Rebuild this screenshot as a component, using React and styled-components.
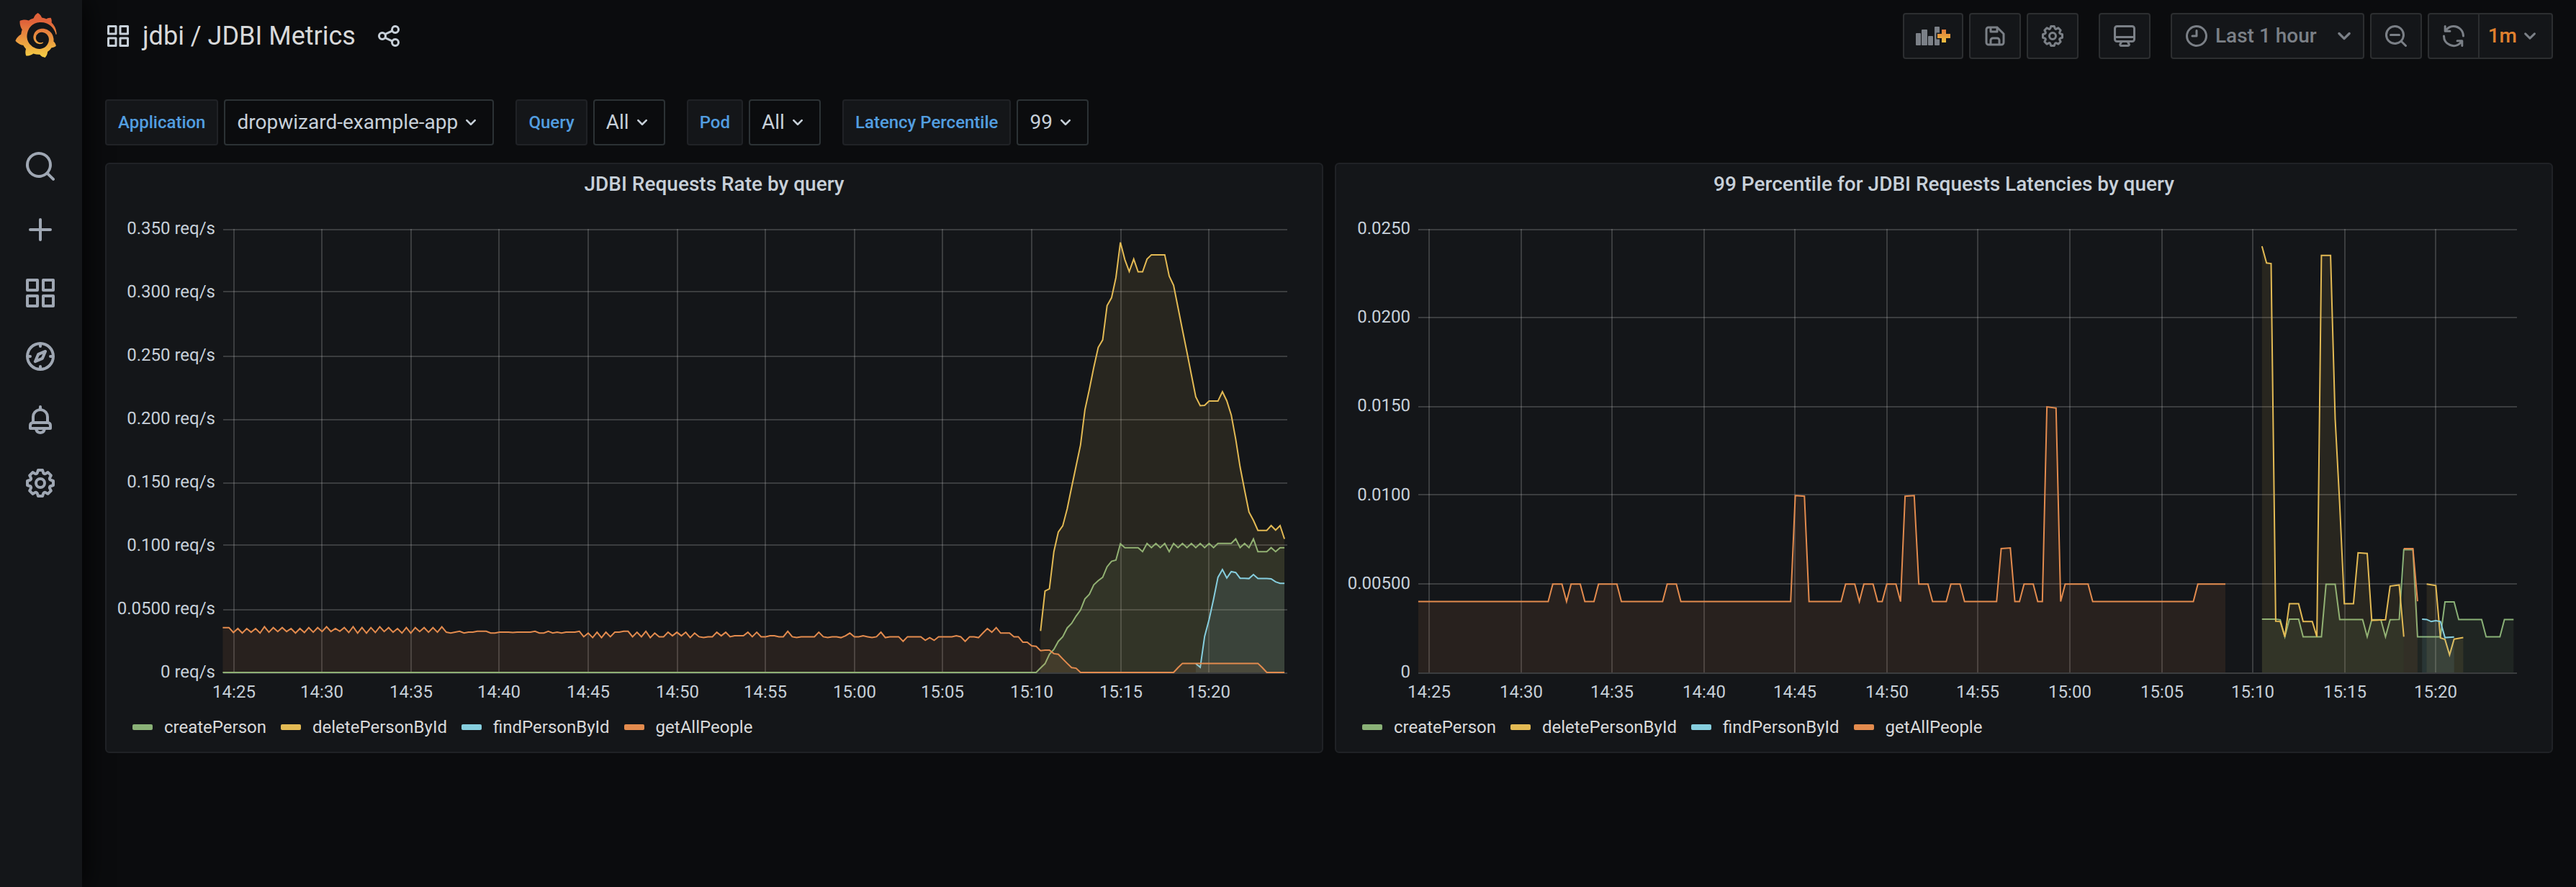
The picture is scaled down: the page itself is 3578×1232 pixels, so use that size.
import React from 'react'
import styled, { createGlobalStyle } from 'styled-components'
import { SiGrafana } from 'react-icons/si'

const colors = {
  page: '#0b0c0e',
  panel: '#141619',
  panelBorder: '#202226',
  controlBorder: '#2c2e30',
  inputBorder: '#2c3235',
  text: '#c7d0d9',
  heading: '#d8d9da',
  muted: '#7b8087',
  nav: '#9fa7b3',
  link: '#529ee0',
  orange: '#e0812f',
}

const GlobalStyle = createGlobalStyle`
  * {
    box-sizing: border-box;
  }
  body {
    margin: 0;
    background: ${colors.page};
    color: ${colors.text};
    font-family: Roboto, 'Liberation Sans', sans-serif;
  }
  button, select {
    font-family: inherit;
    margin: 0;
    cursor: pointer;
  }
`

// Icons, all on a 24 unit grid
const paths = {
  search:
    'M21.71,20.29,18,16.61A9,9,0,1,0,16.61,18l3.68,3.68a1,1,0,0,0,1.42,0A1,1,0,0,0,21.71,20.29ZM11,18a7,7,0,1,1,7-7A7,7,0,0,1,11,18Z',
  plus: 'M19,11H13V5a1,1,0,0,0-2,0v6H5a1,1,0,0,0,0,2h6v6a1,1,0,0,0,2,0V13h6a1,1,0,0,0,0-2Z',
  apps:
    'M10,13H3a1,1,0,0,0-1,1v7a1,1,0,0,0,1,1h7a1,1,0,0,0,1-1V14A1,1,0,0,0,10,13ZM9,20H4V15H9ZM21,2H14a1,1,0,0,0-1,1v7a1,1,0,0,0,1,1h7a1,1,0,0,0,1-1V3A1,1,0,0,0,21,2ZM20,9H15V4h5Zm1,4H14a1,1,0,0,0-1,1v7a1,1,0,0,0,1,1h7a1,1,0,0,0,1-1V14A1,1,0,0,0,21,13Zm-1,7H15V15h5ZM10,2H3A1,1,0,0,0,2,3v7a1,1,0,0,0,1,1h7a1,1,0,0,0,1-1V3A1,1,0,0,0,10,2ZM9,9H4V4H9Z',
  compass:
    'M12,2A10,10,0,1,0,22,12,10,10,0,0,0,12,2Zm1,17.93V19a1,1,0,0,0-2,0v.93A8,8,0,0,1,4.07,13H5a1,1,0,0,0,0-2H4.07A8,8,0,0,1,11,4.07V5a1,1,0,0,0,2,0V4.07A8,8,0,0,1,19.93,11H19a1,1,0,0,0,0,2h.93A8,8,0,0,1,13,19.93ZM15.14,7.55l-5,2.12a1,1,0,0,0-.52.52l-2.12,5a1,1,0,0,0,.21,1.1,1,1,0,0,0,.7.3.93.93,0,0,0,.4-.09l5-2.12a1,1,0,0,0,.52-.52l2.12-5a1,1,0,0,0-1.31-1.31Zm-2.49,5.1-2.28,1,1-2.28,2.28-1Z',
  bell:
    'M18,13.18V10a6,6,0,0,0-5-5.91V3a1,1,0,0,0-2,0V4.09A6,6,0,0,0,6,10v3.18A3,3,0,0,0,4,16v2a1,1,0,0,0,1,1H8.14a4,4,0,0,0,7.72,0H19a1,1,0,0,0,1-1V16A3,3,0,0,0,18,13.18ZM8,10a4,4,0,0,1,8,0v3H8Zm4,10a2,2,0,0,1-1.72-1h3.44A2,2,0,0,1,12,20Zm6-3H6V16a1,1,0,0,1,1-1H17a1,1,0,0,1,1,1Z',
  cog:
    'M21.32,9.55l-1.89-.63.89-1.78A1,1,0,0,0,20.13,6L18,3.87a1,1,0,0,0-1.15-.19l-1.78.89-.63-1.89A1,1,0,0,0,13.5,2h-3a1,1,0,0,0-.95.68L8.92,4.57,7.14,3.68A1,1,0,0,0,6,3.87L3.87,6a1,1,0,0,0-.19,1.15l.89,1.78-1.89.63A1,1,0,0,0,2,10.5v3a1,1,0,0,0,.68.95l1.89.63-.89,1.78A1,1,0,0,0,3.87,18L6,20.13a1,1,0,0,0,1.15.19l1.78-.89.63,1.89a1,1,0,0,0,.95.68h3a1,1,0,0,0,.95-.68l.63-1.89,1.78.89A1,1,0,0,0,18,20.13L20.13,18a1,1,0,0,0,.19-1.15l-.89-1.78,1.89-.63A1,1,0,0,0,22,13.5v-3A1,1,0,0,0,21.32,9.55ZM20,12.78l-1.2.4A2,2,0,0,0,17.64,16l.57,1.14-1.1,1.1L16,17.64a2,2,0,0,0-2.79,1.16l-.4,1.2H11.22l-.4-1.2A2,2,0,0,0,8,17.64l-1.14.57-1.1-1.1L6.36,16A2,2,0,0,0,5.2,13.18L4,12.78V11.22l1.2-.4A2,2,0,0,0,6.36,8L5.79,6.89l1.1-1.1L8,6.36A2,2,0,0,0,10.82,5.2l.4-1.2h1.56l.4,1.2A2,2,0,0,0,16,6.36l1.14-.57,1.1,1.1L17.64,8a2,2,0,0,0,1.16,2.79l1.2.4ZM12,8a4,4,0,1,0,4,4A4,4,0,0,0,12,8Zm0,6a2,2,0,1,1,2-2A2,2,0,0,1,12,14Z',
  save:
    'M20.71,9.29l-6-6a1,1,0,0,0-.32-.21A1.09,1.09,0,0,0,14,3H6A3,3,0,0,0,3,6V18a3,3,0,0,0,3,3H18a3,3,0,0,0,3-3V10A1,1,0,0,0,20.71,9.29ZM9,5h4V7H9Zm6,14H9V16a1,1,0,0,1,1-1h4a1,1,0,0,1,1,1Zm4-1a1,1,0,0,1-1,1H17V16a3,3,0,0,0-3-3H10a3,3,0,0,0-3,3v3H6a1,1,0,0,1-1-1V6A1,1,0,0,1,6,5H7V8A1,1,0,0,0,8,9h6a1,1,0,0,0,1-1V6.41l4,4Z',
  monitor:
    'M19,2H5A3,3,0,0,0,2,5V15a3,3,0,0,0,3,3H7.64l-.58,1a2,2,0,0,0,0,2,2,2,0,0,0,1.75,1h6.46A2,2,0,0,0,17,21a2,2,0,0,0,0-2l-.59-1H19a3,3,0,0,0,3-3V5A3,3,0,0,0,19,2ZM8.77,20,10,18H14l1.2,2ZM20,15a1,1,0,0,1-1,1H5a1,1,0,0,1-1-1V14H20Zm0-3H4V5A1,1,0,0,1,5,4H19a1,1,0,0,1,1,1Z',
  clock:
    'M12,2A10,10,0,1,0,22,12,10,10,0,0,0,12,2Zm0,18a8,8,0,1,1,8-8A8,8,0,0,1,12,20ZM12,6a1,1,0,0,0-1,1v4H8a1,1,0,0,0,0,2h4a1,1,0,0,0,1-1V7A1,1,0,0,0,12,6Z',
  zoomOut:
    'M21.71,20.29,18,16.61A9,9,0,1,0,16.61,18l3.68,3.68a1,1,0,0,0,1.42,0A1,1,0,0,0,21.71,20.29ZM11,18a7,7,0,1,1,7-7A7,7,0,0,1,11,18ZM15,10H7a1,1,0,0,0,0,2h8a1,1,0,0,0,0-2Z',
  sync:
    'M19.91,15.51H15.38a1,1,0,0,0,0,2h2.4A8,8,0,0,1,4,12a1,1,0,1,0-2,0,10,10,0,0,0,16.88,7.23V21a1,1,0,0,0,2,0V16.5A1,1,0,0,0,19.91,15.51ZM12,2A10,10,0,0,0,5.12,4.77V3a1,1,0,0,0-2,0V7.5a1,1,0,0,0,1,1h4.5a1,1,0,0,0,0-2H6.22A8,8,0,0,1,20,12a1,1,0,0,0,2,0A10,10,0,0,0,12,2Z',
  angleDown:
    'M17,9.17a1,1,0,0,0-1.41,0L12,12.71,8.46,9.17a1,1,0,0,0-1.41,0,1,1,0,0,0,0,1.42l4.24,4.24a1,1,0,0,0,1.42,0L17,10.59A1,1,0,0,0,17,9.17Z',
  share:
    'M18,14a4,4,0,0,0-3.08,1.48l-5.1-2.35a3.64,3.64,0,0,0,0-2.26l5.1-2.35A4,4,0,1,0,14,6a4.17,4.17,0,0,0,.07.71L8.79,9.14a4,4,0,1,0,0,5.72l5.28,2.43A4.17,4.17,0,0,0,14,18a4,4,0,1,0,4-4ZM18,4a2,2,0,1,1-2,2A2,2,0,0,1,18,4ZM6,14a2,2,0,1,1,2-2A2,2,0,0,1,6,14Zm12,6a2,2,0,1,1,2-2A2,2,0,0,1,18,20Z',
}

const IconSvg = styled.svg`
  display: block;
  flex: none;
  fill: currentColor;
`

const Icon = ({ name, size = 36 }) => (
  <IconSvg viewBox="0 0 24 24" width={size} height={size} aria-hidden="true">
    <path d={paths[name]} />
  </IconSvg>
)

const AddPanelIcon = () => (
  <IconSvg viewBox="0 0 48 26" width="48" height="26" aria-hidden="true">
    <defs>
      <linearGradient id="add-plus" x1="0" y1="0" x2="0" y2="1">
        <stop offset="0" stopColor="#e0783a" />
        <stop offset="1" stopColor="#f0c040" />
      </linearGradient>
    </defs>
    <rect x="0" y="9" width="7" height="17" rx="1" />
    <rect x="8" y="4" width="8" height="22" rx="1" />
    <rect x="17" y="13" width="7" height="13" rx="1" />
    <rect x="26" y="0" width="7" height="26" rx="1" />
    <path
      d="M36,4H42V10H48V16H42V22H36V16H30V10H36Z"
      fill="url(#add-plus)"
      stroke={colors.panel}
      strokeWidth="3"
      paintOrder="stroke"
    />
  </IconSvg>
)

// Shell
const Page = styled.div`
  display: flex;
  min-height: 100vh;
`

const Sidebar = styled.nav`
  flex: none;
  width: 114px;
  background: ${colors.panel};
  box-shadow: 0 0 40px #000;
`

const LogoLink = styled.a`
  display: flex;
  justify-content: center;
  height: 187px;
  padding: 18px 14px 0 0;

  svg {
    fill: url(#logo-fill);
  }
`

const NavItem = styled.button`
  display: flex;
  align-items: center;
  justify-content: center;
  width: 100%;
  height: 88px;
  padding: 0 2px 0 0;
  border: 0;
  background: none;
  color: ${colors.nav};
`

const Main = styled.main`
  flex: 1;
  min-width: 0;
  padding: 0 32px;
`

const Toolbar = styled.header`
  display: flex;
  align-items: center;
  justify-content: space-between;
  height: 100px;
`

const TitleGroup = styled.div`
  display: flex;
  align-items: center;
  color: ${colors.text};
`

const PageTitle = styled.h1`
  margin: 0 28px 0 16px;
  font-size: 36px;
  line-height: 44px;
  font-weight: 400;
  color: ${colors.heading};
`

const PlainButton = styled.button`
  padding: 0;
  border: 0;
  background: none;
  color: inherit;
`

const Actions = styled.div`
  display: flex;
  gap: 28px;
`

const ButtonRow = styled.div`
  display: flex;
  gap: 8px;
`

const ToolButton = styled.button`
  display: flex;
  align-items: center;
  justify-content: center;
  height: 64px;
  min-width: 72px;
  padding: ${({ $menu }) => ($menu ? '0 6px 0 16px' : '0 16px')};
  border: 2px solid ${colors.controlBorder};
  border-radius: 4px;
  background: ${colors.panel};
  color: ${colors.muted};
  font-size: 28px;
  line-height: 36px;
  font-weight: 500;
`

const TimeLabel = styled.span`
  margin: 0 18px 0 8px;
`

const SplitButton = styled.div`
  display: flex;

  ${ToolButton}:first-child {
    border-radius: 4px 0 0 4px;
  }
  ${ToolButton}:last-child {
    margin-left: -2px;
    padding: 0 12px;
    border-radius: 0 4px 4px 0;
  }
`

const Interval = styled.span`
  color: ${colors.orange};
`

// Template variables
const Variables = styled.div`
  display: flex;
  flex-wrap: wrap;
  gap: 30px;
  margin-top: 38px;
`

const Variable = styled.div`
  display: flex;
  gap: 8px;
`

const VariableLabel = styled.label`
  display: flex;
  align-items: center;
  height: 64px;
  padding: 0 16px;
  border: 2px solid ${colors.panelBorder};
  border-radius: 4px;
  background: ${colors.panel};
  color: ${colors.link};
  font-size: 24px;
  font-weight: 500;
`

const SelectBox = styled.div`
  display: flex;
  align-items: center;
  gap: 2px;
  height: 64px;
  padding: 0 14px 0 16px;
  border: 2px solid ${colors.inputBorder};
  border-radius: 4px;
`

const Select = styled.select`
  appearance: none;
  padding: 0;
  border: 0;
  background: none;
  color: ${colors.text};
  font-size: 28px;
  line-height: 36px;
`

// Panels
const Panels = styled.div`
  display: grid;
  grid-template-columns: repeat(2, minmax(0, 1fr));
  gap: 16px;
  margin-top: 24px;
`

const PanelBox = styled.section`
  border: 2px solid ${colors.panelBorder};
  border-radius: 6px;
  background: ${colors.panel};
`

const PanelTitle = styled.h2`
  margin: 0;
  font-size: 28px;
  line-height: 56px;
  font-weight: 500;
  text-align: center;
`

const ChartSvg = styled.svg`
  display: block;
  width: 100%;
  height: auto;

  text {
    fill: ${colors.text};
    font-size: 24px;
    text-rendering: geometricPrecision;
  }
`

const Legend = styled.ul`
  display: flex;
  flex-wrap: wrap;
  gap: 20px;
  margin: 0;
  padding: 0 36px 8px;
  list-style: none;
  font-size: 24px;
  line-height: 52px;
  color: ${colors.heading};
`

const LegendItem = styled.li`
  display: flex;
  align-items: center;
  gap: 16px;

  &::before {
    content: '';
    width: 28px;
    height: 8px;
    border-radius: 2px;
    background: ${({ $color }) => $color};
  }
`

// One sample every 15 seconds, sample 0 is 14:25.
// Heights are measured over the baseline, FULL is the top of the axis.
const FULL = 1462
const PLOT_TOP = 35
const PLOT_BOTTOM = 650
const PLOT_RIGHT = 1640

const times = ['14:25', '14:30', '14:35', '14:40', '14:45', '14:50', '14:55', '15:00', '15:05', '15:10', '15:15', '15:20']

const names = [
  ['createPerson', '#8ab177'],
  ['deletePersonById', '#e3ba54'],
  ['findPersonById', '#86cede'],
  ['getAllPeople', '#e38b4e'],
]

const from = (start, heights) => heights.map((h, i) => [start + i, h])

const rateSeries = [
  [
    [
      [-2.4, 0],
      ...from(181, [
        0, 15, 29, 60, 76, 103, 118, 147, 162, 186, 206, 243, 258, 289, 303, 314, 349, 367, 371, 425, 412, 412, 412,
        412, 399, 426, 412, 426, 412, 426, 399, 426, 412, 426, 412, 426, 412, 426, 412, 426, 412, 426, 426, 426, 426,
        441, 412, 426, 412, 441, 399, 399, 399, 412, 399, 412, 412,
      ]),
    ],
  ],
  [
    from(182, [
      137, 269, 276, 399, 464, 484, 540, 611, 681, 751, 867, 935, 1007, 1073, 1098, 1211, 1237, 1304, 1420, 1363, 1324,
      1365, 1323, 1323, 1365, 1379, 1379, 1379, 1379, 1309, 1278, 1204, 1131, 1058, 983, 910, 881, 882, 896, 896, 896,
      927, 897, 850, 770, 678, 602, 530, 502, 469, 469, 469, 485, 470, 485, 441,
    ]),
  ],
  [
    from(217, [
      29, 17, 119, 175, 242, 314, 340, 312, 333, 330, 311, 311, 310, 323, 310, 310, 310, 309, 299, 294, 294,
    ]),
  ],
  [
    [
      [-2.4, 148],
      ...from(-1, [
        148, 132, 145, 130, 145, 133, 145, 130, 151, 133, 148, 135, 148, 135, 145, 130, 145, 132, 148, 133, 148, 135,
        151, 135, 145, 136, 148, 132, 151, 130, 148, 130, 148, 132, 151, 135, 148, 133, 145, 130, 148, 130, 148, 135,
        148, 133, 148, 133, 151, 133, 130, 133, 136, 130, 133, 133, 136, 136, 136, 130, 130, 133, 133, 133, 132, 133,
        133, 133, 133, 136, 130, 130, 136, 130, 133, 130, 133, 133, 133, 136, 118, 130, 115, 133, 115, 133, 118, 133,
        133, 136, 136, 118, 133, 118, 136, 115, 130, 118, 118, 133, 121, 133, 121, 133, 115, 130, 118, 115, 118, 118,
        133, 121, 133, 118, 121, 121, 121, 133, 118, 133, 118, 118, 121, 121, 118, 118, 136, 118, 115, 118, 118, 118,
        118, 133, 118, 115, 118, 118, 115, 121, 130, 118, 118, 121, 118, 115, 118, 133, 115, 118, 118, 118, 103, 118,
        118, 118, 118, 106, 115, 106, 118, 118, 118, 118, 121, 118, 103, 118, 118, 115, 130, 145, 133, 148, 130, 130,
        130, 118, 118, 100, 100, 88, 86, 72, 74, 74, 62, 60, 45, 30, 16, 14, 0,
      ]),
      ...from(212, [0, 16]),
      [214, 30],
      [231, 30],
      [232, 16],
      [233, 0],
      [237, 0],
    ],
  ],
]

const latencySeries = [
  [
    [
      [182, 176], [185, 176], [186, 174], [187, 118], [188, 176], [190, 176], [191, 118], [195, 118], [196, 291],
      [198, 291], [199, 175], [204, 175], [205, 118], [206, 174], [208, 174], [209, 118], [210, 174], [212, 175],
      [213, 406], [215, 405], [216, 118], [221, 118], [222, 233], [224, 233], [225, 175], [230, 175], [231, 118],
      [234, 118], [235, 175], [237, 175],
    ],
  ],
  [
    [
      [182, 1407], [183, 1352], [184, 1350], [185, 169], [186, 168], [187, 118], [188, 227], [190, 227], [191, 168],
      [193, 168], [194, 118], [195, 1377], [197, 1377], [198, 837], [199, 555], [200, 227], [202, 227], [203, 395],
      [205, 393], [206, 172], [209, 174], [210, 285], [212, 289], [213, 118],
    ],
    [[218, 292], [220, 287], [221, 114], [222, 109], [223, 58], [224, 110], [226, 115]],
  ],
  [[[217, 176], [218, 175], [219, 168], [220, 171], [221, 168], [222, 115], [224, 117]]],
  [
    [
      [-2.4, 234], [26, 234], [27, 292], [29, 292], [30, 234], [31, 292], [33, 292], [34, 234], [36, 234], [37, 292],
      [41, 292], [42, 234], [51, 234], [52, 292], [54, 292], [55, 234], [79, 234], [80, 584], [82, 582], [83, 234],
      [90, 234], [91, 292], [93, 292], [94, 234], [95, 292], [97, 292], [98, 234], [99, 234], [100, 292], [102, 292],
      [103, 234], [104, 582], [106, 584], [107, 292], [109, 292], [110, 234], [113, 234], [114, 292], [116, 292],
      [117, 234], [124, 234], [125, 409], [127, 411], [128, 234], [129, 234], [130, 292], [132, 292], [133, 234],
      [134, 234], [135, 877], [137, 873], [138, 234], [139, 292], [144, 292], [145, 234], [167, 234], [168, 292],
      [174, 292],
    ],
    [[213, 409], [215, 409], [216, 235]],
  ],
]

const rateChart = {
  title: 'JDBI Requests Rate by query',
  left: 162,
  first: 176.2,
  step: 6.16,
  yTicks: [
    ['0.350 req/s', 35],
    ['0.300 req/s', 121],
    ['0.250 req/s', 211],
    ['0.200 req/s', 299],
    ['0.150 req/s', 387],
    ['0.100 req/s', 473],
    ['0.0500 req/s', 563],
    ['0 req/s', 651],
  ],
  series: rateSeries,
}

const latencyChart = {
  title: '99 Percentile for JDBI Requests Latencies by query',
  left: 114,
  first: 129.2,
  step: 6.355,
  yTicks: [
    ['0.0250', 35],
    ['0.0200', 157],
    ['0.0150', 281],
    ['0.0100', 403],
    ['0.00500', 527],
    ['0', 651],
  ],
  series: latencySeries,
}

// 2px lines stay crisp when their centre is an odd pixel
const snap = x => 2 * Math.floor(x / 2) + 1

const Chart = ({ chart }) => {
  const { title, left, first, step, yTicks, series } = chart
  const px = k => (first + k * step).toFixed(1)
  const py = h => (PLOT_BOTTOM - (h / FULL) * (PLOT_BOTTOM - PLOT_TOP)).toFixed(1)
  const labelGap = 616 / (yTicks.length - 1)

  return (
    <ChartSvg viewBox="0 0 1688 700" role="img" aria-label={title}>
      <g stroke="#c8c8c8" strokeOpacity="0.22" strokeWidth="2">
        {yTicks.map(([label, y]) => (
          <line key={label} x1={left} x2={PLOT_RIGHT} y1={y} y2={y} />
        ))}
        {times.map((time, i) => {
          const x = snap(first + i * 20 * step)
          return <line key={time} x1={x} x2={x} y1={PLOT_TOP - 1} y2={PLOT_BOTTOM} />
        })}
      </g>
      {series.map((segments, s) =>
        segments.map(points => {
          const line = points.map(([k, h]) => `${px(k)},${py(h)}`).join(' ')
          const start = px(points[0][0])
          const end = px(points[points.length - 1][0])
          return (
            <g key={`${names[s][0]}-${start}`}>
              <polygon
                points={`${start},${PLOT_BOTTOM} ${line} ${end},${PLOT_BOTTOM}`}
                fill={names[s][1]}
                fillOpacity="0.1"
              />
              <polyline points={line} fill="none" stroke={names[s][1]} strokeWidth="2" />
            </g>
          )
        })
      )}
      {yTicks.map(([label], i) => (
        <text key={label} x={left - 11} y={Math.round(41 + i * labelGap)} textAnchor="end">
          {label}
        </text>
      ))}
      {times.map((time, i) => (
        <text key={time} x={snap(first + i * 20 * step)} y="685" textAnchor="middle">
          {time}
        </text>
      ))}
    </ChartSvg>
  )
}

const Panel = ({ chart }) => (
  <PanelBox>
    <PanelTitle>{chart.title}</PanelTitle>
    <Chart chart={chart} />
    <Legend>
      {names.map(([name, color]) => (
        <LegendItem key={name} $color={color}>
          {name}
        </LegendItem>
      ))}
    </Legend>
  </PanelBox>
)

const navItems = [
  ['search', 'Search'],
  ['plus', 'Create'],
  ['apps', 'Dashboards'],
  ['compass', 'Explore'],
  ['bell', 'Alerting'],
  ['cog', 'Configuration'],
]

const variables = [
  ['application', 'Application', 'dropwizard-example-app'],
  ['query', 'Query', 'All'],
  ['pod', 'Pod', 'All'],
  ['percentile', 'Latency Percentile', '99'],
]

const App = () => (
  <>
    <GlobalStyle />
    <Page>
      <Sidebar>
        <LogoLink href="#" aria-label="Home">
          <svg width="0" height="0" aria-hidden="true">
            <defs>
              <linearGradient id="logo-fill" x1="0" y1="0" x2="0" y2="1">
                <stop offset="0.2" stopColor="#e0623a" />
                <stop offset="1" stopColor="#f5cf45" />
              </linearGradient>
            </defs>
          </svg>
          <SiGrafana size={62} />
        </LogoLink>
        {navItems.map(([icon, label]) => (
          <NavItem key={icon} type="button" aria-label={label}>
            <Icon name={icon} size={48} />
          </NavItem>
        ))}
      </Sidebar>
      <Main>
        <Toolbar>
          <TitleGroup>
            <Icon name="apps" />
            <PageTitle>jdbi / JDBI Metrics</PageTitle>
            <PlainButton type="button" aria-label="Share dashboard">
              <Icon name="share" />
            </PlainButton>
          </TitleGroup>
          <Actions>
            <ButtonRow>
              <ToolButton type="button" aria-label="Add panel">
                <AddPanelIcon />
              </ToolButton>
              <ToolButton type="button" aria-label="Save dashboard">
                <Icon name="save" />
              </ToolButton>
              <ToolButton type="button" aria-label="Dashboard settings">
                <Icon name="cog" />
              </ToolButton>
            </ButtonRow>
            <ToolButton type="button" aria-label="Cycle view mode">
              <Icon name="monitor" />
            </ToolButton>
            <ButtonRow>
              <ToolButton type="button" $menu>
                <Icon name="clock" />
                <TimeLabel>Last 1 hour</TimeLabel>
                <Icon name="angleDown" size={40} />
              </ToolButton>
              <ToolButton type="button" aria-label="Zoom out">
                <Icon name="zoomOut" />
              </ToolButton>
              <SplitButton>
                <ToolButton type="button" aria-label="Refresh">
                  <Icon name="sync" />
                </ToolButton>
                <ToolButton type="button" aria-label="Refresh interval, 1m">
                  <Interval>1m</Interval>
                  <Icon name="angleDown" />
                </ToolButton>
              </SplitButton>
            </ButtonRow>
          </Actions>
        </Toolbar>
        <Variables>
          {variables.map(([id, label, value]) => (
            <Variable key={id}>
              <VariableLabel htmlFor={id}>{label}</VariableLabel>
              <SelectBox>
                <Select id={id} defaultValue={value}>
                  <option>{value}</option>
                </Select>
                <Icon name="angleDown" size={32} />
              </SelectBox>
            </Variable>
          ))}
        </Variables>
        <Panels>
          <Panel chart={rateChart} />
          <Panel chart={latencyChart} />
        </Panels>
      </Main>
    </Page>
  </>
)

export default App
